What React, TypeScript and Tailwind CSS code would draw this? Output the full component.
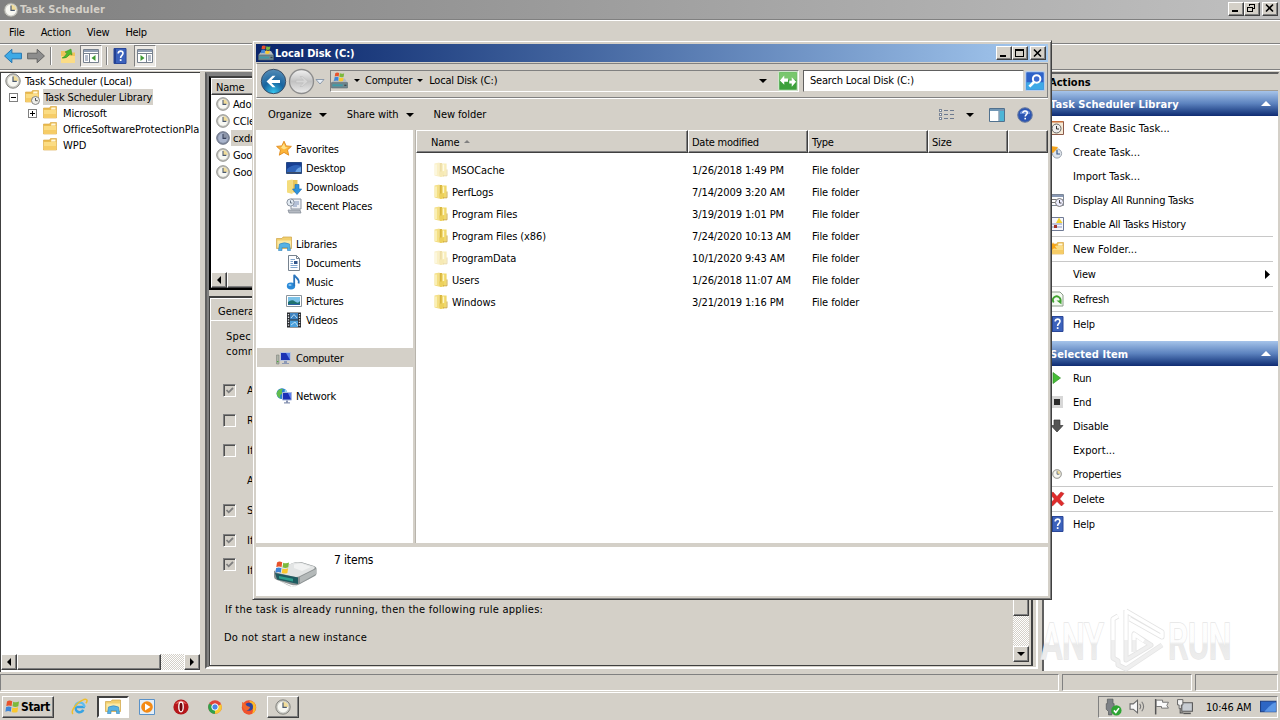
import type { ReactNode } from "react";
import clsx from "clsx";

const RAISED =
  "border border-t-white border-l-white border-r-[#404040] border-b-[#404040] bg-[#d4d0c8] shadow-[inset_-1px_-1px_0_#808080]";
const SUNKEN = "border border-t-[#808080] border-l-[#808080] border-r-white border-b-white";
const DITHER = "bg-[repeating-conic-gradient(#ffffff_0_25%,#d4d0c8_0_50%)] bg-[length:2px_2px]";

type SvgProps = { size?: number; className?: string; children?: ReactNode };

function Svg({ size = 16, className, children }: SvgProps): React.ReactElement {
  return (
    <svg viewBox="0 0 16 16" width={size} height={size} className={clsx("shrink-0", className)}>
      {children}
    </svg>
  );
}

function ClockIcon({ size = 16, dark = false }: { size?: number; dark?: boolean }): React.ReactElement {
  return (
    <Svg size={size}>
      <circle cx="8" cy="8" r="7.2" fill={dark ? "#8a93a8" : "#c9c9c4"} stroke={dark ? "#5b6478" : "#85857f"} strokeWidth="1" />
      <circle cx="8" cy="8" r="5.4" fill={dark ? "#a9b4cc" : "#f8f8f2"} />
      <path d="M8 8V2.6A5.4 5.4 0 0 1 13.4 8Z" fill={dark ? "#8b93a5" : "#f0dc9a"} />
      <path d="M8 3.5V8.4H11.8" fill="none" stroke={dark ? "#39425c" : "#4c5a70"} strokeWidth="1.2" />
    </Svg>
  );
}

function FolderIcon({ clock = false, spark = false }: { clock?: boolean; spark?: boolean }): React.ReactElement {
  return (
    <Svg>
      <path d="M1.5 3H7.5L8.5 1.5H14.5V13H1.5Z" fill="#ecbe52" stroke="#d6a23c" strokeWidth=".6" />
      <path d="M9.5 2.5H13.5V4.5H9Z" fill="#fff8dd" />
      <path d="M1.8 5H14.2V12.7H1.8Z" fill="#fbdc83" />
      <path d="M1.8 9H14.2V12.7H1.8Z" fill="#f6cc66" />
      {spark && <path d="M4 1L5 3.5L8 3L6 5.5L8 8L5 7.2L3 9V6L0 5L3 3.8Z" fill="#f7a416" />}
      {clock && (
        <>
          <circle cx="11.5" cy="11.5" r="4" fill="#eeeeea" stroke="#777" strokeWidth=".9" />
          <path d="M11.5 9V11.7H13.7" fill="none" stroke="#555" />
        </>
      )}
    </Svg>
  );
}

function BookFolder({ faded }: { faded?: boolean }): React.ReactElement {
  return (
    <Svg className={faded ? "opacity-45" : ""}>
      <path d="M1.5 1.5L6.5 .5V14.8L1.5 13.5Z" fill="#f4df84" />
      <path d="M6.5 1H9V14.5H6.5Z" fill="#d9b63c" />
      <path d="M8.7 1.5H13.6V13.5H8.7Z" fill="#f0d869" />
      <path d="M3 2.5V13M10.5 2.5V9" stroke="#fdf6c8" strokeWidth="1.4" />
      <path d="M6 9.5H11V14.6L7 15Z" fill="#ecd05a" />
      <path d="M14 7.5V13.8H10" fill="none" stroke="#c9a43a" strokeWidth=".9" />
    </Svg>
  );
}

function HelpBook(): React.ReactElement {
  return (
    <Svg>
      <path d="M2 .5H14V15.5H2Z" fill="#3c62bc" stroke="#2a4798" />
      <path d="M2 1H4V15H2Z" fill="#254293" />
      <path d="M6.2 5.4C6.2 2.3 11 2.4 11 5.3C11 7.4 8.6 7.3 8.6 10" fill="none" stroke="#fff" strokeWidth="1.6" />
      <rect x="7.8" y="11.2" width="1.7" height="1.8" fill="#fff" />
    </Svg>
  );
}

function Flag(): React.ReactElement {
  return (
    <>
      <path d="M2 2.4Q4.5.9 7.2 2.3L6.6 7Q4 5.8 1.3 7Z" fill="#e8532c" />
      <path d="M8.2 2.7Q11 4 14 2.6L13.3 7.2Q10.5 8.5 7.5 7.3Z" fill="#7cb93c" />
      <path d="M1.1 8Q3.8 6.8 6.4 8L5.8 12.7Q3.2 11.5.4 12.8Z" fill="#3f86d8" />
      <path d="M7.4 8.4Q10.3 9.6 13.1 8.2L12.4 13Q9.6 14.2 6.7 13Z" fill="#fac82e" />
    </>
  );
}

function DriveIcon({ size = 16 }: { size?: number }): React.ReactElement {
  return (
    <Svg size={size}>
      <path d="M2 8L4 6H13L15.5 10H.5Z" fill="#b4bcc0" />
      <path d="M.5 10H15.5V15H.5Z" fill="#6f8890" stroke="#56666c" strokeWidth=".6" />
      <path d="M1.5 12.5H11" stroke="#3f9aa6" strokeWidth="1.8" />
      <path d="M12.5 12.5H14.5" stroke="#3c4448" strokeWidth="1.2" />
      <g transform="translate(2.6 -.6) scale(.7)">
        <Flag />
      </g>
    </Svg>
  );
}

function BigDrive(): React.ReactElement {
  return (
    <svg viewBox="0 0 46 30" width="46" height="30">
      <path d="M3 20L14 26Q20 29 25 26L42 16L36 20L20 28Z" fill="#b9bdbd" />
      <path d="M1 12L20 4Q23 2.5 28 3L41 7Q44 8 43.5 11V15Q43 17 40 18L27 25Q23 27 19 26L4 21Q1 20 1 18Z" fill="#8c9293" />
      <path d="M2 11L20 4Q23 3 28 3.5L41 7.5Q43 9 40 10.5L27 17Q24 18.5 20 17.5L5 14Q1 13 2 11Z" fill="#e2e4e4" />
      <path d="M21 5.5L28 4.3L38 8L29 12L21 9Z" fill="#f1f2f2" />
      <path d="M2 14L25 18.5V25L4 20.5Z" fill="#1e5a60" />
      <path d="M6 17L20 19.8V22.5L6 19.5Z" fill="#2ea08e" />
      <path d="M27 18L43 10V15L27 24Z" fill="#b4b9b9" />
      <g transform="translate(2 1)">
        <Flag />
      </g>
    </svg>
  );
}

function MonitorIcon({ children }: { children?: ReactNode }): React.ReactElement {
  return (
    <Svg>
      <path d="M4 2H15V11H4Z" fill="#b8c4dd" />
      <path d="M5 3H14V10H5Z" fill="#1c33b4" />
      <path d="M10 3H14V10Z" fill="#5f86e8" />
      <path d="M8 11H11V13H13V14H6V13H8Z" fill="#8c98b4" />
      {children}
    </Svg>
  );
}

const NAV_ICONS: Record<string, ReactNode> = {
  Favorites: (
    <Svg>
      <path d="M8 .2L10.2 4.9L15.4 5.4L11.5 8.9L12.7 14.2L8 11.4L3.3 14.2L4.5 8.9L.6 5.4L5.8 4.9Z" fill="#fcb53a" stroke="#e08a1c" strokeWidth=".9" />
      <path d="M8 2.4L9.3 5.9L12 6.4L8 8.4L5 6.8Z" fill="#ffe18a" />
    </Svg>
  ),
  Desktop: (
    <Svg>
      <path d="M.5 2.5H15.5V13.5H.5Z" fill="#2e62b8" stroke="#274a86" />
      <path d="M1 9Q8 3 15 6V3H1Z" fill="#173f92" />
      <path d="M9 13Q10 8 15 7V13Z" fill="#6aa2e4" />
      <path d="M1 12H15V13.5H1Z" fill="#3b4d6a" />
    </Svg>
  ),
  Downloads: (
    <Svg>
      <path d="M1 1.5L6.5 .5V15L1 13.5Z" fill="#f4dc7c" />
      <path d="M6.5 1H11.5V13.5H6.5Z" fill="#e9c658" />
      <path d="M9 5.5H13V10H15.7L11 15.5L6.5 10H9Z" fill="#2f93dc" stroke="#1a6bb2" strokeWidth=".6" />
    </Svg>
  ),
  "Recent Places": (
    <Svg>
      <path d="M5 1H15V11H5Z" fill="#eef0f4" stroke="#8b93a0" />
      <path d="M7 4H13M7 6H13M7 8H11" stroke="#7a90b8" />
      <path d="M2 12H14L15 15H3Z" fill="#b5bac2" stroke="#7f8792" strokeWidth=".7" />
      <circle cx="4.5" cy="4.5" r="3.6" fill="#e3ebf3" stroke="#8b93a0" />
      <path d="M4.5 2.5V5H6.3" fill="none" stroke="#5a6778" strokeWidth=".9" />
    </Svg>
  ),
  Libraries: (
    <Svg>
      <path d="M.5 2.5H6L7 1H15.5V12.5H.5Z" fill="#f1cf6d" stroke="#cfa446" strokeWidth=".7" />
      <path d="M1.5 4.5H15V11.5H1.5Z" fill="#fbe9a6" />
      <path d="M3.5 8Q8.5 5.5 13.5 8L14.5 14.5H11.5V11.5H6V14.5H2.5Z" fill="#56b2e4" stroke="#2f83bd" strokeWidth=".6" />
    </Svg>
  ),
  Documents: (
    <Svg>
      <path d="M2.5 .5H10.5L13.5 3.5V15.5H2.5Z" fill="#fcfdff" stroke="#76828f" />
      <path d="M10.5 .5V3.5H13.5" fill="none" stroke="#76828f" />
      <path d="M4.5 4.5H9M4.5 6.5H7M4.5 8.5H7M4.5 10.5H11.5M4.5 12.5H11.5" stroke="#7fa5cf" />
      <path d="M8 6H11.5V9H8Z" fill="#31568b" />
    </Svg>
  ),
  Music: (
    <Svg>
      <ellipse cx="5" cy="12" rx="4.2" ry="3.4" fill="#2a8ad8" />
      <path d="M8.2 12V.8C9 4 14 4 12.6 9.5" fill="none" stroke="#2a74bc" strokeWidth="1.8" />
      <ellipse cx="4" cy="11" rx="1.6" ry="1" fill="#8fc8f4" />
    </Svg>
  ),
  Pictures: (
    <Svg>
      <path d="M.5 2.5H15.5V13.5H.5Z" fill="#fff" stroke="#8b949c" />
      <path d="M2 4H14V12H2Z" fill="#7cc2e8" />
      <path d="M2 9Q6 6 9 8.5T14 8V12H2Z" fill="#1e706e" />
      <path d="M2 11H14V12H2Z" fill="#2a5fa4" />
    </Svg>
  ),
  Videos: (
    <Svg>
      <path d="M1 .5H15V15.5H1Z" fill="#2a2c30" />
      <path d="M4 1H12V7.5H4Z" fill="#3f83c0" />
      <path d="M4 8.5H12V15H4Z" fill="#4aa0dc" />
      <path d="M5 6L8 2.5L11 6M5 13L9 10L12 14" fill="none" stroke="#b9dcf2" />
      <path d="M2.5 2V15M13.5 2V15" stroke="#dfe3e8" strokeWidth="1.3" strokeDasharray="1.3 1.3" />
    </Svg>
  ),
  Computer: (
    <MonitorIcon>
      <path d="M.5 5H3V14H.5Z" fill="#aeb3aa" stroke="#7d837b" strokeWidth=".6" />
      <rect x="1" y="11" width="1.4" height="1.2" fill="#4cae3c" />
    </MonitorIcon>
  ),
  Network: (
    <Svg>
      <circle cx="6" cy="5.6" r="5.4" fill="#2a7fd2" />
      <path d="M2 2.6Q5 0 7 1.1Q5 3.6 6.5 5.6Q3 6.6 4.5 10.6Q.5 8.6 .6 5.1Z" fill="#62bd4c" />
      <path d="M9 1.1Q12 3.6 11 5.6L8.5 3.6Z" fill="#9ad4f2" />
      <path d="M6.5 4.5H15.5V12H6.5Z" fill="#1c2fb6" stroke="#a9b8dc" />
      <path d="M12 5H15V11.5Z" fill="#5e7ff0" />
      <path d="M10 12.5H12V14.3H14V15.5H8V14.3H10Z" fill="#8894b2" />
    </Svg>
  ),
};

function Caret({ small = false, className }: { small?: boolean; className?: string }): React.ReactElement {
  return (
    <svg viewBox="0 0 8 4" width={small ? 6 : 8} height={small ? 3 : 4} className={clsx("shrink-0", className)}>
      <path d="M0 0H8L4 4Z" fill="currentColor" />
    </svg>
  );
}

type ButtonKind = "min" | "max" | "restore" | "close";

function CaptionButton({ kind }: { kind: ButtonKind }): React.ReactElement {
  return (
    <div className={clsx(RAISED, "flex h-[14px] w-[16px] items-center justify-center", kind === "close" && "ml-[2px]")}>
      <svg viewBox="0 0 12 11" width="12" height="11" fill="none" stroke="#000" shapeRendering="crispEdges">
        {kind === "min" && <path d="M2 8H8" strokeWidth="2" />}
        {kind === "max" && (
          <>
            <path d="M1.5 1.5H9.5V8.5H1.5Z" />
            <path d="M1 2H10" strokeWidth="2" />
          </>
        )}
        {kind === "restore" && (
          <>
            <path d="M3.5 3V1.5H8.5V5.5H7" />
            <path d="M1.5 4.5H6.5V8.5H1.5ZM1 4H7M3 1H9" />
          </>
        )}
        {kind === "close" && <path d="M2 1.5L9 8.5M9 1.5L2 8.5" strokeWidth="1.6" shapeRendering="auto" />}
      </svg>
    </div>
  );
}

function ScrollArrow({ dir }: { dir: "left" | "right" | "down" }): React.ReactElement {
  return (
    <div className={clsx(RAISED, "flex h-4 w-4 shrink-0 items-center justify-center")}>
      <Caret className={clsx(dir === "left" && "rotate-90", dir === "right" && "-rotate-90")} />
    </div>
  );
}

function ConsoleIcon({ flip = false }: { flip?: boolean }): React.ReactElement {
  return (
    <Svg className={flip ? "-scale-x-100" : ""}>
      <path d="M.5 1.5H15.5V14.5H.5Z" fill="#fff" stroke="#77818e" />
      <path d="M1 2H15V4H1Z" fill="#92a0b4" />
      <path d="M1 5.5H15M6.5 5V14" stroke="#77818e" />
      <path d="M2 8H5M2 10H5M2 12H5" stroke="#6d7c98" />
      <path d="M12.5 7V13L8.5 10Z" fill="#3e9a34" />
    </Svg>
  );
}

function Separator({ className }: { className?: string }): React.ReactElement {
  return <div className={clsx("h-[18px] w-[2px] border-l border-[#808080] border-r border-r-white", className)} />;
}

function MenuToolbar(): React.ReactElement {
  return (
    <>
      <div className="flex h-[23px] items-center gap-[16px] border-b border-[#808080] pt-[2px] pl-[9px]">
        <span>File</span>
        <span className="tracking-[-0.15px]">Action</span>
        <span>View</span>
        <span className="tracking-[-0.3px]">Help</span>
      </div>
      <div className="flex h-[26px] items-center border-t border-b border-t-white border-b-[#808080] pb-[2px] pl-[4px]">
        <Svg size={18}>
          <path d="M.5 8L7 2V5.5H15.5V10.5H7V14Z" fill="#3eaae6" stroke="#1d6fae" strokeWidth=".8" />
        </Svg>
        <Svg size={18} className="ml-[5px]">
          <path d="M15.5 8L9 2V5.5H.5V10.5H9V14Z" fill="#8d8d8d" stroke="#5f5f5f" strokeWidth=".8" />
        </Svg>
        <Separator className="mx-[5px]" />
        <Svg className="ml-[3px]">
          <path d="M1 3H8L9 4.5H15V15H1Z" fill="#efc45c" />
          <path d="M1 8H15V15H1Z" fill="#fbdc86" />
          <path d="M2 10Q5 9 7 5L5 4L11 1L12 7L10 6Q7 11 2 10Z" fill="#4cb82e" stroke="#2f8a1c" strokeWidth=".5" />
        </Svg>
        <div className={clsx(SUNKEN, "ml-[4px] flex h-[22px] w-[22px] items-center justify-center bg-[#ece9e4]")}>
          <ConsoleIcon />
        </div>
        <Separator className="mr-[4px] ml-[4px]" />
        <HelpBook />
        <div className={clsx(SUNKEN, "ml-[6px] flex h-[22px] w-[22px] items-center justify-center bg-[#ece9e4]")}>
          <ConsoleIcon flip />
        </div>
      </div>
    </>
  );
}

function Expander({ open }: { open: boolean }): React.ReactElement {
  return (
    <svg viewBox="0 0 9 9" width="9" height="9" shapeRendering="crispEdges" className="shrink-0">
      <path d="M.5 .5H8.5V8.5H.5Z" fill="#fff" stroke="#808080" />
      <path d={open ? "M2 4.5H7" : "M2 4.5H7M4.5 2V7"} stroke="#000" />
    </svg>
  );
}

function TaskTree(): React.ReactElement {
  return (
    <div className="flex w-[200px] shrink-0 flex-col border-t border-l border-[#404040] bg-white tracking-[-0.15px]">
      <div className="flex h-[597px] flex-col overflow-hidden whitespace-nowrap">
        <div className="flex h-4 items-center gap-[4px] pl-[4px]">
          <ClockIcon />
          <span className="pt-px">Task Scheduler (Local)</span>
        </div>
        <div className="flex h-4 items-center pl-[8px]">
          <Expander open />
          <span className="ml-[6px] flex">
            <FolderIcon clock />
          </span>
          <span className="ml-[3px] h-4 bg-[#d4d0c8] px-[1px] leading-[18px]">Task Scheduler Library</span>
        </div>
        <div className="flex h-4 items-center pl-[27px]">
          <Expander open={false} />
          <span className="mr-[5px] ml-[5px] flex">
            <FolderIcon />
          </span>
          <span className="pt-[2px]">Microsoft</span>
        </div>
        {["OfficeSoftwareProtectionPla", "WPD"].map((name) => (
          <div key={name} className="flex h-4 items-center gap-[5px] pl-[41px]">
            <FolderIcon />
            <span className="pt-[2px] tracking-[-0.04px]">{name}</span>
          </div>
        ))}
        <div className={clsx(DITHER, "mt-auto flex h-4 justify-between")}>
          <div className="flex">
            <ScrollArrow dir="left" />
            <div className={clsx(RAISED, "h-4 w-[144px]")} />
          </div>
          <ScrollArrow dir="right" />
        </div>
      </div>
    </div>
  );
}

const CONDITIONS = [
  { label: "A", checked: true },
  { label: "R", checked: false },
  { label: "If", checked: false },
  { label: "A" },
  { label: "S", checked: true },
  { label: "If", checked: true },
];

function CheckBox({ checked }: { checked: boolean }): React.ReactElement {
  return (
    <div className="h-[13px] w-[13px] border border-t-[#808080] border-l-[#808080] border-r-white border-b-white shadow-[inset_1px_1px_0_#505050]">
      {checked && (
        <svg viewBox="0 0 11 11" width="11" height="11">
          <path d="M2.5 5L4.7 7.3L9 3" fill="none" stroke="#808080" strokeWidth="1.8" />
        </svg>
      )}
    </div>
  );
}

function CenterPane(): React.ReactElement {
  const tasks = ["Adobe", "CCleaner", "cxdm", "Google", "Google"];
  return (
    <div className="flex h-[597px] w-[833px] shrink-0 flex-col border-2 border-t-[#808080] border-r-white border-b-white border-l-[#606060] bg-[#808080] pt-[2px] pl-[2px]">
      <div className="flex flex-1 flex-col bg-[#d4d0c8]">
        <div className="flex h-[214px] flex-col border-2 border-black border-t-[#404040] bg-white">
          <div className={clsx(RAISED, "flex h-[17px] shrink-0 items-center pt-[2px] pl-[4px]")}>Name</div>
          {tasks.map((task, i) => (
            <div key={i} className="flex h-[17px] items-center pl-[5px]">
              <ClockIcon size={14} dark={i === 2} />
              <span className={clsx("ml-px h-4 px-[2px] leading-[17px]", i === 2 && "bg-[#d4d0c8]")}>{task}</span>
            </div>
          ))}
          <div className={clsx(DITHER, "mt-auto flex h-4")}>
            <ScrollArrow dir="left" />
            <div className={clsx(RAISED, "h-4 w-[500px]")} />
          </div>
        </div>
        <div className="mt-[6px] mr-[3px] mb-px flex flex-1 border-t-2 border-r-2 border-b border-l border-[#404040]">
          <div className="flex w-[803px] flex-col tracking-[-0.04px]">
            <div className="flex h-[22px] w-[52px] items-center border-t border-l border-white pt-[4px] pl-[7px]">General</div>
            <div className="flex-1 border-t border-l border-white pt-[8px] pl-[14px]">
              <p className="h-[15px] pl-px leading-[15px] tracking-[0.2px]">Spec</p>
              <p className="h-[15px] pl-px leading-[15px] tracking-[0.2px]">comm</p>
              <div className="mt-[16px] -ml-[2px]">
                {CONDITIONS.map(({ label, checked }, i) => (
                  <div key={i} className="flex h-[30px] items-center">
                    <div className="w-[24px]">{checked !== undefined && <CheckBox checked={checked} />}</div>
                    <span className="pt-[2px]">{label}</span>
                  </div>
                ))}
                <div className="flex h-[30px] items-start">
                  <div className="w-[24px] pt-[3px]">
                    <CheckBox checked />
                  </div>
                  <span className="pt-[9px]">If</span>
                </div>
              </div>
              <p className="mt-[17px] leading-[16px] tracking-[0.25px]">
                If the task is already running, then the following rule applies:
              </p>
              <p className="mt-[12px] -ml-px leading-[16px] tracking-[0.22px]">Do not start a new instance</p>
            </div>
          </div>
          <div className={clsx(DITHER, "mb-[3px] flex w-4 flex-col")}>
            <div className={clsx(RAISED, "h-[318px]")} />
            <div className="mt-auto">
              <ScrollArrow dir="down" />
            </div>
          </div>
        </div>
      </div>
    </div>
  );
}

type Action = { label: string; icon?: ReactNode; rule?: boolean; submenu?: boolean };

const LIBRARY_ACTIONS: Action[] = [
  {
    label: "Create Basic Task...",
    icon: (
      <Svg>
        <path d="M1 1.5H14.5V14.5H1Z" fill="#f5ead6" stroke="#8c5a4a" />
        <path d="M1 1H14V2.5H1Z" fill="#c96f3c" />
        <circle cx="7.5" cy="8.5" r="4.5" fill="#eee" stroke="#666" />
        <path d="M7.5 6V9H10" fill="none" stroke="#333" />
      </Svg>
    ),
  },
  {
    label: "Create Task...",
    icon: (
      <Svg>
        <circle cx="8" cy="9.5" r="4.6" fill="#dfe5ec" stroke="#9aa2ad" />
        <path d="M8 6V10H11" fill="none" stroke="#3b5a88" strokeWidth="1.2" />
        <path d="M1 2L9 3L7 6L4 9L1 7Z" fill="#f5a51d" />
      </Svg>
    ),
  },
  { label: "Import Task..." },
  {
    label: "Display All Running Tasks",
    icon: (
      <Svg>
        <path d="M.5 2.5H14.5V13.5H.5Z" fill="#fff" stroke="#7c8798" />
        <path d="M1 3H14V5H1Z" fill="#8898b4" />
        <path d="M2 7.5H7M2 10.5H6" stroke="#777" />
        <circle cx="10.5" cy="10.5" r="4" fill="#eef" stroke="#777" />
        <path d="M10.5 8V11H12.5" fill="none" stroke="#444" />
      </Svg>
    ),
  },
  {
    label: "Enable All Tasks History",
    icon: (
      <Svg>
        <path d="M1 1.5H14.5V14.5H1Z" fill="#f7f7fb" stroke="#6f7a95" />
        <path d="M3 8H13M3 11H13" stroke="#8494c0" />
        <path d="M10 1.5L13.5 7H7Z" fill="#f2d22e" />
        <rect x="5" y="9" width="3" height="3" fill="#a3362c" />
      </Svg>
    ),
    rule: true,
  },
  { label: "New Folder...", icon: <FolderIcon spark />, rule: true },
  { label: "View", rule: true, submenu: true },
  {
    label: "Refresh",
    icon: (
      <Svg>
        <path d="M1.5 1H11L14 4V15H1.5Z" fill="#f4faf2" stroke="#8c9c8a" />
        <path d="M4.7 11.5A3.8 3.8 0 1 1 11 11" fill="none" stroke="#3fa22f" strokeWidth="1.8" />
        <path d="M7.5 9.5H12.5V13.5Z" fill="#3fa22f" />
      </Svg>
    ),
    rule: true,
  },
  { label: "Help", icon: <HelpBook /> },
];

const ITEM_ACTIONS: Action[] = [
  {
    label: "Run",
    icon: (
      <Svg>
        <path d="M4 2.5L11.5 8L4 13.5Z" fill="#45bd36" stroke="#2f8f26" strokeWidth=".7" />
      </Svg>
    ),
  },
  {
    label: "End",
    icon: (
      <Svg>
        <path d="M2 2H14V14H2Z" fill="#d7d7d7" />
        <path d="M5 5H11V11H5Z" fill="#2c2c2c" />
      </Svg>
    ),
  },
  {
    label: "Disable",
    icon: (
      <Svg>
        <path d="M5 2H11V7.5H14L8 14L2 7.5H5Z" fill="#555" stroke="#3a3a3a" strokeWidth=".7" />
      </Svg>
    ),
  },
  { label: "Export..." },
  { label: "Properties", icon: <ClockIcon size={10} />, rule: true },
  {
    label: "Delete",
    icon: (
      <Svg>
        <path d="M1 3L4 1L8 5.5L12 1L15 2.5L10.7 8L15 12.5L12.5 15L8 10.5L3.5 15L1 13L5.3 8Z" fill="#df2c2c" stroke="#b01d1d" strokeWidth=".5" />
      </Svg>
    ),
    rule: true,
  },
  { label: "Help", icon: <HelpBook /> },
];

function ActionGroup({ title, items }: { title: string; items: Action[] }): React.ReactElement {
  return (
    <section>
      <h2 className="flex h-[25px] items-center justify-between bg-linear-to-b from-[#a6c4ea] via-[#5c82be] to-[#0f2b72] pr-[7px] pl-[6px] font-bold tracking-[0.08px] text-white">
        <span className="pt-[2px]">{title}</span>
        <svg viewBox="0 0 10 5" width="10" height="5">
          <path d="M0 5H10L5 0Z" fill="#fff" />
        </svg>
      </h2>
      {items.map(({ label, icon, rule, submenu }) => (
        <div key={label} className="pr-[5px]">
          <div className="flex h-6 items-center pl-[5px]">
            <div className="flex w-4 justify-center">{icon}</div>
            <span className={clsx("ml-[8px] pt-px", label.endsWith("...") && "tracking-[0.04px]")}>{label}</span>
            {submenu && (
              <svg viewBox="0 0 5 9" width="5" height="9" className="mr-[3px] ml-auto">
                <path d="M0 0V9L5 4.5Z" />
              </svg>
            )}
          </div>
          {rule && <div className="h-px bg-[#c8c8c8]" />}
        </div>
      ))}
    </section>
  );
}

function ActionsPane(): React.ReactElement {
  return (
    <div className="mr-px ml-auto flex h-[599px] w-[237px] flex-col border-t-2 border-r border-l-2 border-[#606060] border-r-[#d4d0c8] bg-white tracking-[-0.17px]">
      <div className="h-[17px] border-b border-[#a09c94] bg-[#d4d0c8] pl-[5px] leading-[18px] font-bold tracking-[0.05px]">Actions</div>
      <ActionGroup title="Task Scheduler Library" items={LIBRARY_ACTIONS} />
      <div className="h-[5px]" />
      <ActionGroup title="Selected Item" items={ITEM_ACTIONS} />
    </div>
  );
}

function SchedulerWindow(): React.ReactElement {
  return (
    <div className="flex h-[692px] flex-col">
      <div className="flex h-[19px] items-center bg-linear-to-r from-[#808080] to-[#c0c0c0] pr-[2px] pl-[3px]">
        <ClockIcon />
        <span className="ml-px font-bold tracking-[0.08px] text-[#d4d0c8]">Task Scheduler</span>
        <div className="mb-[2px] ml-auto flex">
          <CaptionButton kind="min" />
          <CaptionButton kind="restore" />
          <CaptionButton kind="close" />
        </div>
      </div>
      <div className="h-[2px] border-t border-[#808080] bg-white" />
      <MenuToolbar />
      <div className="flex h-[602px] border-t border-white pt-[1px]">
        <TaskTree />
        <div className="w-[5px] border-l border-[#d4d0c8]" />
        <CenterPane />
        <ActionsPane />
      </div>
      <div className="flex h-[19px] gap-[3px] border-t border-[#d4d0c8] pt-px">
        <div className={clsx(SUNKEN, "h-[17px] w-[1059px]")} />
        <div className={clsx(SUNKEN, "h-[17px] w-[130px]")} />
        <div className={clsx(SUNKEN, "h-[17px] w-[83px]")} />
      </div>
    </div>
  );
}

const NAV_GROUPS = [
  ["Favorites", "Desktop", "Downloads", "Recent Places"],
  ["Libraries", "Documents", "Music", "Pictures", "Videos"],
  ["Computer"],
  ["Network"],
];

const FILES = [
  { name: "MSOCache", date: "1/26/2018 1:49 PM", hidden: true },
  { name: "PerfLogs", date: "7/14/2009 3:20 AM" },
  { name: "Program Files", date: "3/19/2019 1:01 PM" },
  { name: "Program Files (x86)", date: "7/24/2020 10:13 AM" },
  { name: "ProgramData", date: "10/1/2020 9:43 AM", hidden: true },
  { name: "Users", date: "1/26/2018 11:07 AM" },
  { name: "Windows", date: "3/21/2019 1:16 PM" },
];

function AddressRow(): React.ReactElement {
  return (
    <div className="flex h-[35px] items-center border border-t-[#808080] border-r-[#808080] border-b-[#808080] border-l-white pl-[3px] shadow-[0_1px_0_#ffffff]">
      <svg viewBox="0 0 66 28" width="66" height="28" className="shrink-0">
        <defs>
          <radialGradient id="back" cx=".5" cy=".95" r=".9">
            <stop offset="0" stopColor="#35c4ee" />
            <stop offset=".5" stopColor="#17649f" />
            <stop offset="1" stopColor="#4f88b4" />
          </radialGradient>
          <linearGradient id="forward" x1="0" y1="0" x2="0" y2="1">
            <stop offset="0" stopColor="#f2f2f2" />
            <stop offset=".5" stopColor="#c2c2c2" />
            <stop offset="1" stopColor="#ececec" />
          </linearGradient>
        </defs>
        <circle cx="13.5" cy="14.5" r="12.2" fill="url(#back)" stroke="#3c4f66" />
        <path d="M6.5 14.5L12.5 8.8H15.5L11.5 13H20V16H11.5L15.5 20.2H12.5Z" fill="#fff" />
        <circle cx="41.5" cy="14.5" r="12" fill="url(#forward)" stroke="#8c8c8c" strokeWidth="1.3" />
        <path d="M48 14.5L42.5 9.5H40L43.5 13.2H36V15.8H43.5L40 19.5H42.5Z" fill="#d6d6d6" stroke="#b8b8b8" strokeWidth=".5" />
        <path d="M56 12.5H64L60 17Z" fill="#e7edf5" stroke="#7a8aa0" strokeWidth=".8" />
      </svg>
      <div className={clsx(SUNKEN, "ml-[4px] flex h-[22px] w-[469px] items-center")}>
        <DriveIcon size={17} />
        <Caret small className="ml-[6px]" />
        <span className="ml-[5px] tracking-[-0.25px]">Computer</span>
        <Caret small className="ml-[5px]" />
        <span className="ml-[6px] tracking-[-0.2px]">Local Disk (C:)</span>
        <Caret className="ml-auto" />
        <Svg size={20} className="ml-[11px]">
          <rect x=".5" y=".5" width="15" height="15" rx="1" fill="#3da03c" stroke="#cfe6cc" />
          <path d="M1 1H15V7H1Z" fill="#79c76e" />
          <path d="M1.5 7.5L5 3.5V6H8V8.5H5V11ZM14.5 8.5L11 5V7.5H9V10H11V12.5Z" fill="#fff" />
        </Svg>
      </div>
      <div className="ml-[4px] flex h-[22px] w-[221px] items-center border border-t-[#606060] border-r-[#d4d0c8] border-b-[#d4d0c8] border-l-[#606060] bg-white pl-[6px]">
        Search Local Disk (C:)
      </div>
      <Svg size={20} className="ml-[1px]">
        <rect x=".5" y=".5" width="15" height="15" rx="1" fill="#2d62c8" stroke="#b6cdec" />
        <path d="M1 9H15V15H1Z" fill="#3fa9e6" />
        <circle cx="9.3" cy="6.3" r="3" fill="#3d6bd0" stroke="#fff" strokeWidth="1.6" />
        <path d="M7.2 8.8L3.5 12.5" stroke="#fff" strokeWidth="2.2" />
      </Svg>
    </div>
  );
}

function CommandBar(): React.ReactElement {
  return (
    <div className="flex h-[32px] items-center pt-px pl-[12px] tracking-[-0.08px]">
      <span>Organize</span>
      <Caret className="ml-[7px]" />
      <span className="ml-[20px]">Share with</span>
      <Caret className="ml-[7px]" />
      <span className="ml-[20px]">New folder</span>
      <div className="mr-[15px] ml-auto flex items-center">
        <svg viewBox="0 0 16 12" width="16" height="12" fill="none" shapeRendering="crispEdges">
          <path d="M1.5 .5H3.5V2.5H1.5ZM1.5 4.5H3.5V6.5H1.5ZM1.5 8.5H3.5V10.5H1.5Z" fill="#fff" stroke="#7b8698" />
          <path d="M6 1.5H10M12 1.5H16M6 5.5H10M12 5.5H16M6 9.5H10M12 9.5H16" stroke="#6e7b90" />
        </svg>
        <Caret className="ml-[12px]" />
        <Svg className="ml-[15px]">
          <path d="M.5 1.5H15.5V14.5H.5Z" fill="#fff" stroke="#51718e" />
          <path d="M1 2H15V4H1Z" fill="#7196b4" />
          <path d="M10.5 4H15V14H10.5Z" fill="#4db5d6" />
          <path d="M10 4V14" stroke="#51718e" />
        </Svg>
        <Svg className="ml-[12px]">
          <circle cx="8" cy="8" r="7.3" fill="#2c55b2" stroke="#6f7f9f" />
          <path d="M3 5Q8 1 13 5V7H3Z" fill="#6c8fd8" />
          <path d="M5.8 6C5.8 3.3 10.3 3.4 10.3 6C10.3 7.6 8.2 7.6 8.2 9.6" fill="none" stroke="#fff" strokeWidth="1.5" />
          <rect x="7.4" y="10.8" width="1.6" height="1.6" fill="#fff" />
        </Svg>
      </div>
    </div>
  );
}

function navIndent(name: string, i: number): string {
  if (name === "Computer") return "ml-px bg-[#d4d0c8] pl-[19px]";
  return i === 0 ? "pl-[20px]" : "pl-[30px]";
}

function NavTree(): React.ReactElement {
  return (
    <div className="flex h-[413px] w-[157px] shrink-0 flex-col gap-[19px] bg-white pt-[9px]">
      {NAV_GROUPS.map((group) => (
        <div key={group[0]}>
          {group.map((name, i) => (
            <div key={name} className={clsx("flex h-[19px] items-center gap-[4px]", navIndent(name, i))}>
              {NAV_ICONS[name]}
              <span className="pt-[2px]">{name}</span>
            </div>
          ))}
        </div>
      ))}
    </div>
  );
}

function FileList(): React.ReactElement {
  return (
    <div className="flex-1 bg-white">
      <div className="flex h-[23px]">
        <div className={clsx(RAISED, "flex w-[272px] items-center pt-[2px] pl-[14px]")}>
          Name
          <svg viewBox="0 0 6 3" width="6" height="3" className="mb-[3px] ml-[5px]">
            <path d="M0 3H6L3 0Z" fill="#808080" />
          </svg>
        </div>
        <div className={clsx(RAISED, "flex w-[120px] items-center pt-[2px] pl-[3px] tracking-[-0.25px]")}>Date modified</div>
        <div className={clsx(RAISED, "flex w-[120px] items-center pt-[2px] pl-[3px]")}>Type</div>
        <div className={clsx(RAISED, "flex w-[80px] items-center pt-[2px] pl-[3px]")}>Size</div>
        <div className={clsx(RAISED, "flex-1")} />
      </div>
      <div className="pt-[6px] tracking-[-0.1px]">
        {FILES.map(({ name, date, hidden }) => (
          <div key={name} className="flex h-[22px] items-center pl-[17px]">
            <BookFolder faded={hidden} />
            <span className="ml-[3px] w-[240px] pt-px">{name}</span>
            <span className="w-[120px] pt-px">{date}</span>
            <span className="pt-px">File folder</span>
          </div>
        ))}
      </div>
    </div>
  );
}

function ExplorerWindow(): React.ReactElement {
  return (
    <div className="absolute top-[40px] left-[252px] flex h-[560px] w-[800px] flex-col border border-t-[#d4d0c8] border-r-[#404040] border-b-[#404040] border-l-[#d4d0c8] bg-[#d4d0c8] p-[3px] shadow-[inset_1px_1px_0_#ffffff,inset_-1px_-1px_0_#808080] whitespace-nowrap">
      <div className="flex h-[18px] shrink-0 items-center bg-linear-to-r from-[#0a246a] to-[#a6caf0] pr-[2px] pl-[2px]">
        <DriveIcon />
        <span className="ml-px pt-px font-bold tracking-[-0.05px] text-white">Local Disk (C:)</span>
        <div className="ml-auto flex">
          <CaptionButton kind="min" />
          <CaptionButton kind="max" />
          <CaptionButton kind="close" />
        </div>
      </div>
      <div className="mt-[1px]">
        <AddressRow />
      </div>
      <CommandBar />
      <div className="flex h-[413px]">
        <NavTree />
        <div className="w-[3px] border-r border-[#b8b4ac]" />
        <FileList />
      </div>
      <div className="mt-[4px] flex flex-1 bg-white pl-[17px]">
        <span className="flex pt-[12px]">
          <BigDrive />
        </span>
        <span className="ml-[15px] pt-[6px] text-[12px] tracking-[-0.15px]">7 items</span>
      </div>
    </div>
  );
}

function Watermark(): React.ReactElement {
  return (
    <svg viewBox="0 0 242 70" width="242" height="70" className="absolute top-[604px] left-[1038px]">
      <defs>
        <linearGradient id="mark" x1="0" y1="0" x2="0" y2="1">
          <stop offset="0" stopColor="#ffffff" />
          <stop offset=".5" stopColor="#fdfdfd" />
          <stop offset=".54" stopColor="#e9e9e9" />
          <stop offset="1" stopColor="#f1f1f1" />
        </linearGradient>
      </defs>
      <g stroke="#e6e6e6" strokeWidth="1.6" paintOrder="stroke" fill="url(#mark)" fontFamily="Roboto, sans-serif" fontSize="50" fontWeight="500">
        <g transform="translate(3 55) scale(.64 1)">
          <text>ANY</text>
        </g>
        <g transform="translate(130 55) scale(.64 1)">
          <text>RUN</text>
        </g>
      </g>
      <g fill="none" strokeLinejoin="round">
        <path d="M80 12L75 15V54L80 57V61L88 65L124 41M88 6V56L113 41L96 30V48M88 7L124 28V33L92 15" stroke="#e4e4e4" strokeWidth="5" />
        <path d="M75 36V54L80 57V61L88 65L124 41M88 36V56L113 41L106 37M96 36V48" stroke="#efefef" strokeWidth="3.4" />
        <path d="M80 12L75 15V36M88 36V7L124 28V33L92 15M96 36V30L106 37" stroke="#ffffff" strokeWidth="3.4" />
      </g>
    </svg>
  );
}

function FlagLogo(): React.ReactElement {
  return (
    <Svg>
      <Flag />
    </Svg>
  );
}

function Taskbar(): React.ReactElement {
  const slot = "flex h-[22px] w-[32px] items-center justify-center";
  return (
    <div className="flex h-[28px] items-center border-t border-white bg-[#d4d0c8] pl-[2px]">
      <div className={clsx(RAISED, "flex h-[22px] w-[52px] items-center pl-[2px] text-[12px] font-bold tracking-[-0.4px]")}>
        <FlagLogo />
        <span>Start</span>
      </div>
      <div className="ml-[9px] flex gap-[2px]">
        <div className={slot}>
          <Svg size={17}>
            <path d="M13 8.5H4.7A3.6 3.6 0 0 0 11.5 11" fill="none" stroke="#37a3e2" strokeWidth="2.4" />
            <path d="M4 8.5A4.3 4.3 0 0 1 12.6 8.5" fill="none" stroke="#5fbdf0" strokeWidth="2.4" />
            <path d="M2 15C-1 13 5 4 12 1.5C16 .5 15.5 3 14 5" fill="none" stroke="#efbe2c" strokeWidth="1.4" />
          </Svg>
        </div>
        <div className={clsx(slot, "border-2 border-t-[#404040] border-r-white border-b-white border-l-[#404040] bg-white")}>
          {NAV_ICONS.Libraries}
        </div>
        <div className={slot}>
          <Svg>
            <path d="M.5 .5H15.5V15.5H.5Z" fill="#e4eef8" stroke="#5a92c8" />
            <circle cx="8" cy="8" r="5.8" fill="#f48a14" />
            <path d="M6 4.5L11.5 8L6 11.5Z" fill="#fff" />
          </Svg>
        </div>
        <div className={slot}>
          <Svg>
            <circle cx="8" cy="8" r="7.6" fill="#b5161a" />
            <path d="M2 5Q8-2 14 5Q8 3 2 5Z" fill="#e46a62" />
            <ellipse cx="8" cy="8" rx="2.2" ry="4.8" fill="#6d080c" stroke="#fff" strokeWidth="1.3" />
          </Svg>
        </div>
        <div className={slot}>
          <Svg>
            <circle cx="8" cy="8" r="6.8" fill="#e0443a" />
            <path d="M8 8L2.1 4.6A6.8 6.8 0 0 0 8 14.8Z" fill="#2fa24c" />
            <path d="M8 8L8 14.8A6.8 6.8 0 0 0 14.2 5.2Z" fill="#f8cb34" />
            <circle cx="8" cy="8" r="3.2" fill="#4a86e8" stroke="#fff" />
          </Svg>
        </div>
        <div className={slot}>
          <Svg>
            <circle cx="8" cy="8.5" r="7.2" fill="#f0512c" />
            <path d="M8 2Q14 1 15 8Q15 13 11 15Q14 8 8 2Z" fill="#fbb92c" />
            <circle cx="8" cy="7.8" r="4" fill="#30459e" />
            <path d="M1 3Q4 4 6 7L9 8Q8 12 4 11Q1 9 1 3Z" fill="#f2672c" />
          </Svg>
        </div>
        <div className={clsx(slot, RAISED)}>
          <ClockIcon />
        </div>
      </div>
      <div className={clsx(SUNKEN, "mr-[2px] ml-auto flex h-[22px] w-[180px] items-center pl-[5px]")}>
        <Svg size={18}>
          <path d="M3 1H8V5H9V10L7 12V15H4V12L2 10V5H3Z" fill="#7d8186" stroke="#4f5357" strokeWidth=".6" />
          <circle cx="11" cy="11" r="4.6" fill="#2ea533" />
          <path d="M8.8 11L10.5 12.8L13.3 9" fill="none" stroke="#fff" strokeWidth="1.4" />
        </Svg>
        <Svg size={17} className="ml-[7px]">
          <path d="M1 5.5H4L8 2V14L4 10.5H1Z" fill="#f7f7f7" stroke="#666" />
          <path d="M10 5.5Q12 8 10 10.5M12 3.5Q15.5 8 12 12.5" fill="none" stroke="#777" />
        </Svg>
        <Svg size={17} className="ml-[7px]">
          <path d="M2.5 1V15.5" stroke="#555" strokeWidth="1.4" />
          <path d="M3 2H9V4H14.5L13 7L14.5 9.5H8V8H3Z" fill="#fafafa" stroke="#666" strokeWidth=".8" />
        </Svg>
        <Svg size={17} className="ml-[7px]">
          <path d="M4.5 4.5H14.5V12.5H4.5Z" fill="#c7ccd2" stroke="#555" />
          <path d="M6 14.5H13" fill="none" stroke="#555" strokeWidth="1.4" />
          <path d="M.5 1.5H5.5V6.5H4V10H2V6.5H.5Z" fill="#f4f4f4" stroke="#555" strokeWidth=".8" />
          <path d="M3 10V14H6" fill="none" stroke="#555" />
        </Svg>
        <span className="ml-[12px] pt-[2px] whitespace-nowrap">10:46 AM</span>
        <Svg size={17} className="ml-auto">
          <path d="M.5 3H15V13H.5Z" fill="#2d66c4" stroke="#1e4084" />
          <path d="M4 13Q9 6 15 4V13Z" fill="#5c97e6" />
        </Svg>
      </div>
    </div>
  );
}

export default function App(): React.ReactElement {
  return (
    <div className="relative h-[720px] w-[1280px] overflow-hidden bg-[#d4d0c8] font-['DejaVu_Sans_Condensed','DejaVu_Sans',sans-serif] text-[11px] leading-[14px] tracking-[-0.2px] text-black">
      <SchedulerWindow />
      <Taskbar />
      <ExplorerWindow />
      <Watermark />
    </div>
  );
}
